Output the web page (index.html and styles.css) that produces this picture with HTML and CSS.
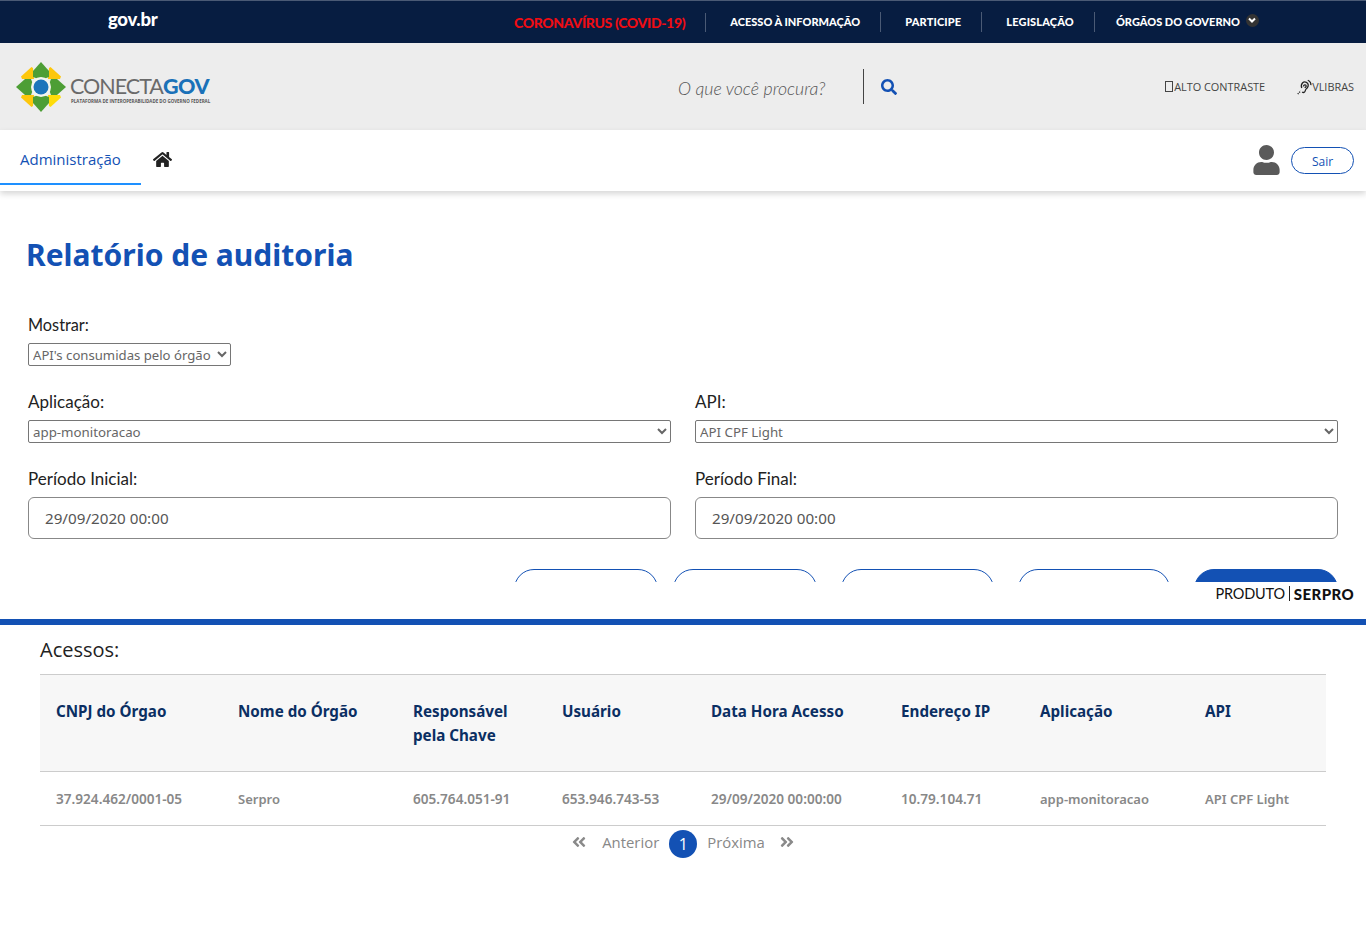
FILE: index.html
```html
<!DOCTYPE html>
<html lang="pt-BR">
<head>
<meta charset="utf-8">
<title>Relatório de auditoria</title>
<link rel="stylesheet" href="styles.css">
</head>
<body>
<div class="topbar">
  <a class="gov">gov.br</a>
  <nav class="toplinks">
    <a class="covid">CORONAVÍRUS (COVID-19)</a>
    <a class="tl">ACESSO À INFORMAÇÃO</a>
    <a class="tl wide">PARTICIPE</a>
    <a class="tl wide">LEGISLAÇÃO</a>
    <a class="tl last">ÓRGÃOS DO GOVERNO
      <span class="chev"><svg viewBox="0 0 12 12" width="12" height="12"><path d="M3 4.500 6 7.500 9 4.500" fill="none" stroke="#fff" stroke-width="2"/></svg></span>
    </a>
  </nav>
</div>
<header class="header">
  <div class="logo">
    <svg class="logo-mark" viewBox="0 0 50 50" width="50" height="50">
      <path d="M15.500 5 5 14.500 6 17 18 17 17 6Z" fill="#fdc70c"/>
      <path d="M34.500 5 45 14.500 44 17 32 17 33 6Z" fill="#fdc70c"/>
      <path d="M15.500 45 5 35.500 6 33 18 33 17 44Z" fill="#fdc70c"/>
      <path d="M34.500 45 45 35.500 44 33 32 33 33 44Z" fill="#fedc0a"/>
      <path d="M25 0 33 9 33 15 25 18 17 15 17 9Z" fill="#4d9e35"/>
      <path d="M25 50 33 41 33 35 25 32 17 35 17 41Z" fill="#4d9e35"/>
      <path d="M0 25 9 17 15 17 18 25 15 33 9 33Z" fill="#4d9e35"/>
      <path d="M50 25 41 17 35 17 32 25 35 33 41 33Z" fill="#4d9e35"/>
      <circle cx="25" cy="25" r="10" fill="#f4f6ee"/>
      <circle cx="25" cy="25" r="7.500" fill="#1b75bb"/>
    </svg>
    <div class="logo-text">
      <div class="logo-name">CONECTA<b>GOV</b></div>
      <div class="logo-sub">PLATAFORMA DE INTEROPERABILIDADE DO GOVERNO FEDERAL</div>
    </div>
  </div>
  <div class="search">
    <span class="search-ph">O que você procura?</span>
    <span class="search-sep"></span>
    <svg class="search-ic" viewBox="0 0 512 512" width="16" height="16"><path fill="#1351b4" d="M505 442.700L405.300 343c-4.500-4.500-10.600-7-17-7H372c27.600-35.300 44-79.700 44-128C416 93.100 322.900 0 208 0S0 93.100 0 208s93.100 208 208 208c48.300 0 92.700-16.400 128-44v16.300c0 6.400 2.500 12.500 7 17l99.700 99.700c9.400 9.400 24.600 9.400 33.900 0l28.300-28.300c9.400-9.400 9.400-24.600.1-34zM208 336c-70.700 0-128-57.200-128-128 0-70.700 57.200-128 128-128 70.700 0 128 57.200 128 128 0 70.700-57.200 128-128 128z"/></svg>
  </div>
  <div class="access">
    <a class="acc contrast"><span class="box"></span>ALTO CONTRASTE</a>
    <a class="acc libras">
      <svg viewBox="0 0 16 16" width="15" height="16"><g fill="none" stroke="#222" stroke-width="1.400"><path d="M5 9C3.500 4.500 7 1.500 10 3c2.500 1.200 2.500 4.200.8 6-1 1-1.800 1.500-2 3-.3 1.800-2 2.400-3.300 1.300"/><path d="M7 7.500C6.800 5.500 9.500 5 9.800 6.800c.2 1-1 1.500-1.600 2"/><path d="M11.500.8c2.300 1 3.500 3 3.300 5.200"/><path d="M.8 15.500 4 12.300" stroke-dasharray="1.200 1"/></g></svg>VLIBRAS
    </a>
  </div>
</header>
<div class="navbar">
  <a class="tab">Administração</a>
  <a class="home"><svg viewBox="0 0 576 512" width="19" height="17"><path fill="#222" d="M280.370 148.260L96 300.110V464a16 16 0 0 0 16 16l112.060-.29a16 16 0 0 0 15.920-16V368a16 16 0 0 1 16-16h64a16 16 0 0 1 16 16v95.640a16 16 0 0 0 16 16.050L464 480a16 16 0 0 0 16-16V300L295.670 148.260a12.190 12.190 0 0 0-15.300 0zM571.600 251.470L488 182.560V44.050a12 12 0 0 0-12-12h-56a12 12 0 0 0-12 12v72.610L318.470 43a48 48 0 0 0-61 0L4.340 251.470a12 12 0 0 0-1.600 16.900l25.500 31A12 12 0 0 0 45.150 301l235.220-193.740a12.190 12.190 0 0 1 15.300 0L530.900 301a12 12 0 0 0 16.900-1.600l25.500-31a12 12 0 0 0-1.700-16.930z"/></svg></a>
  <div class="user">
    <svg viewBox="0 0 448 512" width="27" height="30"><path fill="#5a5a5a" d="M224 256c70.700 0 128-57.300 128-128S294.700 0 224 0 96 57.300 96 128s57.300 128 128 128zm89.600 32h-16.700c-22.200 10.200-46.900 16-72.900 16s-50.600-5.800-72.900-16h-16.700C60.200 288 0 348.200 0 422.400V464c0 26.500 21.500 48 48 48h352c26.500 0 48-21.500 48-48v-41.600c0-74.200-60.200-134.400-134.400-134.400z"/></svg>
    <a class="sair">Sair</a>
  </div>
</div>
<main class="panel">
  <h1 class="title">Relatório de auditoria</h1>
  <div class="field mostrar">
    <label class="lbl">Mostrar:</label>
    <select class="sel sel-auto"><option>API's consumidas pelo órgão</option></select>
  </div>
  <div class="grid">
    <div class="field">
      <label class="lbl">Aplicação:</label>
      <select class="sel"><option>app-monitoracao</option></select>
    </div>
    <div class="field">
      <label class="lbl">API:</label>
      <select class="sel"><option>API CPF Light</option></select>
    </div>
    <div class="field">
      <label class="lbl">Período Inicial:</label>
      <input class="inp" value="29/09/2020 00:00">
    </div>
    <div class="field">
      <label class="lbl">Período Final:</label>
      <input class="inp" value="29/09/2020 00:00">
    </div>
  </div>
  <div class="actions">
    <button class="btn w144"></button>
    <button class="btn w144 near"></button>
    <button class="btn w153"></button>
    <button class="btn w152"></button>
    <button class="btn w144 primary"></button>
  </div>
</main>
<div class="produto">
  <span class="p-light">PRODUTO</span><span class="p-sep"></span><span class="p-bold">SERPRO</span>
</div>
<section class="results">
  <h2 class="res-title">Acessos:</h2>
  <table class="tbl">
    <colgroup>
      <col class="c1"><col class="c2"><col class="c3"><col class="c4"><col class="c5"><col class="c6"><col class="c7"><col class="c8">
    </colgroup>
    <thead>
      <tr>
        <th>CNPJ do Órgao</th>
        <th>Nome do Órgão</th>
        <th>Responsável<br>pela Chave</th>
        <th>Usuário</th>
        <th>Data Hora Acesso</th>
        <th>Endereço IP</th>
        <th>Aplicação</th>
        <th>API</th>
      </tr>
    </thead>
    <tbody>
      <tr>
        <td class="num">37.924.462/0001-05</td>
        <td>Serpro</td>
        <td class="num">605.764.051-91</td>
        <td class="num">653.946.743-53</td>
        <td class="num">29/09/2020 00:00:00</td>
        <td class="num">10.79.104.71</td>
        <td>app-monitoracao</td>
        <td>API CPF Light</td>
      </tr>
    </tbody>
  </table>
  <div class="pager">
    <svg class="pg-ic pg-prev" viewBox="0 0 448 512" width="14" height="16"><path fill="#8a8a8a" d="M223.700 239l136-136c9.400-9.400 24.600-9.400 33.900 0l22.600 22.600c9.400 9.400 9.400 24.600 0 33.900L319.900 256l96.400 96.400c9.400 9.400 9.400 24.600 0 33.900L393.700 409c-9.400 9.400-24.600 9.400-33.900 0l-136-136c-9.500-9.400-9.500-24.600-.1-34zm-192 34l136 136c9.400 9.400 24.600 9.400 33.900 0l22.600-22.600c9.400-9.400 9.400-24.600 0-33.900L127.900 256l96.400-96.400c9.400-9.400 9.400-24.600 0-33.900L201.700 103c-9.400-9.400-24.600-9.400-33.900 0l-136 136c-9.500 9.400-9.500 24.600-.1 34z"/></svg>
    <span class="pg-txt">Anterior</span>
    <span class="pg-cur">1</span>
    <span class="pg-txt">Próxima</span>
    <svg class="pg-ic pg-next" viewBox="0 0 448 512" width="14" height="16"><path fill="#8a8a8a" d="M224.300 273l-136 136c-9.400 9.400-24.600 9.400-33.900 0l-22.600-22.600c-9.400-9.400-9.400-24.600 0-33.900l96.400-96.400-96.400-96.400c-9.400-9.400-9.400-24.600 0-33.900L54.300 103c9.400-9.400 24.600-9.400 33.900 0l136 136c9.500 9.400 9.500 24.600.1 34zm192-34l-136-136c-9.400-9.400-24.600-9.400-33.900 0l-22.600 22.600c-9.400 9.400-9.400 24.600 0 33.900l96.400 96.400-96.400 96.400c-9.400 9.400-9.400 24.600 0 33.900l22.600 22.600c9.400 9.400 24.600 9.400 33.900 0l136-136c9.400-9.200 9.400-24.400 0-33.800z"/></svg>
  </div>
</section>
</body>
</html>
```
FILE: styles.css
```css
* { box-sizing: border-box; }
html, body { margin: 0; padding: 0; }
body { background: #fff; color: #333; font-family: "Open Sans", "Noto Sans", sans-serif; overflow: hidden; height: 938px; }
a { text-decoration: none; }

.topbar { height: 43px; background: #071d41; border-top: 1px solid #4a5a75; display: flex; align-items: center; }
.gov { width: 60px; margin-left: 108px; color: #fff; font: 900 18.500px/1 "Lato", sans-serif; letter-spacing: -.3px; position: relative; top: -3px; }
.toplinks { margin-left: 346px; display: flex; align-items: center; }
.covid { color: #f00c13; font: 900 14px/19px "Lato", sans-serif; letter-spacing: -.34px; padding-right: 20px; border-right: 1px solid #4a5a75; margin-right: 24px; }
.tl { color: #fff; font: 900 11px/20px "Lato", sans-serif; padding-right: 20px; margin-right: 24px; border-right: 1px solid #4a5a75; display: flex; align-items: center; gap: 6px; }
.tl.wide { letter-spacing: .15px; }
.tl.last { border-right: 0; margin: 0 0 0 -3px; padding-right: 0; }
.chev { width: 13px; height: 13px; border-radius: 50%; background: #333; display: inline-flex; align-items: center; justify-content: center; position: relative; top: -2px; }

.header { height: 87px; background: #ededed; display: flex; align-items: center; }
.logo { margin-left: 16px; display: flex; align-items: center; gap: 4px; width: 622px; }
.logo-text { margin-top: 4px; }
.logo-name { font: 400 21.500px/24px "Lato", sans-serif; color: #6a6a6a; letter-spacing: -1px; }
.logo-name b { color: #1a71b8; font-weight: 900; letter-spacing: -.4px; }
.logo-sub { font: 700 4.480px/6px "Open Sans", sans-serif; color: #555; white-space: nowrap; margin-left: 1px; }
.search { display: flex; align-items: center; width: 260px; margin-left: 40px; }
.search-ph { font: italic 300 17.700px/20px "Lato", sans-serif; color: #555; width: 185px; margin-top: 4px; }
.search-sep { width: 1px; height: 35px; background: #444; margin-right: 17px; }
.access { margin-left: auto; display: flex; align-items: center; margin-right: 12px; }
.acc { color: #444; font: 400 10.900px/16px "Open Sans", sans-serif; display: flex; align-items: center; }
.contrast { margin-right: 32px; }
.box { width: 8px; height: 11px; border: 1px solid #444; margin-right: 1px; display: inline-block; }

.navbar { height: 61px; background: #fff; box-shadow: 0 3px 6px rgba(0,0,0,.16); display: flex; align-items: flex-start; position: relative; z-index: 2; }
.tab { width: 141px; height: 55px; border-bottom: 2px solid #1e90ff; color: #1351b4; font: 400 15px/58px "Open Sans", sans-serif; padding-left: 20px; }
.home { margin: 21px 0 0 12px; display: block; line-height: 0; }
.user { margin-left: auto; margin-right: 12px; margin-top: 15px; display: flex; align-items: flex-start; gap: 11px; }
.sair { width: 63px; height: 27px; margin-top: 2px; border: 1px solid #1351b4; border-radius: 14px; color: #1351b4; font: 400 12px/28px "Open Sans", sans-serif; text-align: center; }

.panel { height: 391px; overflow: hidden; padding: 0 28px; }
.title { margin: 45px 0 0 -2px; font: 700 30px/38px "Noto Sans", "Open Sans", sans-serif; color: #1351b4; }
.field { display: flex; flex-direction: column; align-items: stretch; }
.mostrar { margin-top: 39px; align-items: flex-start; }
.lbl { font: 400 17px/24px "Lato", sans-serif; color: #222; }
.mostrar .lbl { font-size: 16.300px; }
.sel { margin-top: 6px; height: 23px; border: 1px solid #767676; border-radius: 2px; background: #fff; color: #666; font: 400 13.300px "Noto Sans", sans-serif; padding: 0; width: 100%; }
.sel-auto { width: 203px; font-size: 13.150px; }
.grid { display: grid; grid-template-columns: 643px 643px; column-gap: 24px; row-gap: 24px; margin-top: 24px; }
.inp { margin-top: 6px; height: 42px; border: 1px solid #888; border-radius: 6px; padding: 0 16px; font: 400 15.200px "Noto Sans", sans-serif; color: #555; width: 100%; background: #fff; }
.actions { display: flex; justify-content: flex-end; margin-top: 30px; }
.btn { height: 40px; border: 1px solid #1351b4; border-radius: 20px; background: #fff; padding: 0; margin-left: 24px; flex: none; }
.btn.near { margin-left: 15px; }
.btn.primary { background: #1351b4; }
.w144 { width: 144px; }
.w153 { width: 153px; }
.w152 { width: 152px; }

.produto { height: 43px; border-bottom: 6px solid #1351b4; display: flex; align-items: center; justify-content: flex-end; padding: 0 12px 14px 0; font-family: "Lato", sans-serif; font-size: 14.500px; color: #111; background: #fff; }
.p-light { font-weight: 400; letter-spacing: -.2px; }
.p-sep { width: 1px; height: 15px; background: #222; margin: 0 4px; }
.p-bold { font-weight: 900; font-size: 15px; letter-spacing: .4px; }

.results { padding: 0 40px; }
.res-title { margin: 12px 0 0; font: 400 20px/26px "Open Sans", sans-serif; color: #222; }
.tbl { margin-top: 11px; width: 1286px; border-collapse: collapse; table-layout: fixed; }
.c1 { width: 182px; } .c2 { width: 175px; } .c3 { width: 149px; } .c4 { width: 149px; }
.c5 { width: 190px; } .c6 { width: 139px; } .c7 { width: 165px; } .c8 { width: 137px; }
.tbl th { background: #f7f7f7; height: 97px; border-top: 1px solid #ccc; border-bottom: 1px solid #ccc; color: #0b2f63; font: 700 15.200px/24px "Noto Sans", sans-serif; text-align: left; vertical-align: top; padding: 24px 10px 0 16px; }
.tbl td { height: 54px; border-bottom: 1px solid #ccc; color: #888; font: 600 13px/20px "Noto Sans", sans-serif; padding: 0 0 0 16px; }
.tbl td.num { font-size: 13.600px; }
.pager { display: flex; align-items: center; justify-content: center; height: 36px; color: #888; }
.pg-txt { font: 400 14.900px/20px "Open Sans", sans-serif; color: #888; margin-bottom: 5px; }
.pg-cur { width: 28px; height: 28px; border-radius: 50%; background: #1351b4; color: #fff; font: 400 16px/28px "Open Sans", sans-serif; text-align: center; margin: 0 10px; }
.pg-ic { margin-bottom: 4px; }
.pg-prev { margin-right: 16px; }
.pg-next { margin-left: 15px; }
```
